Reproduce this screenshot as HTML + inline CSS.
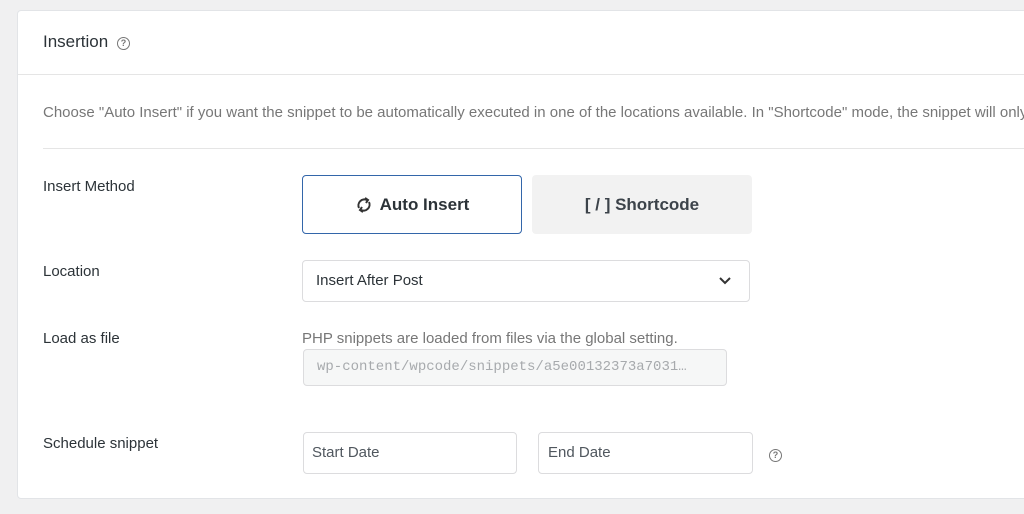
<!DOCTYPE html>
<html><head><meta charset="utf-8"><style>
*{box-sizing:border-box;margin:0;padding:0}
body{width:1024px;height:514px;background:#f0f0f1;font-family:"Liberation Sans",sans-serif;color:#3c434a;position:relative;overflow:hidden}
.card{position:absolute;left:17px;top:10px;width:1020px;height:489px;background:#fff;border:1px solid #e2e4e7;border-radius:4px}
.abs{position:absolute;white-space:nowrap}
.q{display:inline-block;width:13px;height:13px;border:1.3px solid #777;border-radius:50%;font-size:9px;line-height:11px;text-align:center;color:#777;font-weight:bold}
.lbl{font-size:15px;color:#2c3338}
.box{position:absolute;border:1px solid #dcdcde;border-radius:4px;background:#fff}
</style></head><body>
<div class="card"></div>
<div class="abs" style="left:43px;top:32px;font-size:17px;color:#2c3338">Insertion <span class="q" style="margin-left:4px;vertical-align:1px">?</span></div>
<div class="abs" style="left:18px;top:74px;width:1010px;height:1px;background:#e5e5e5"></div>
<div class="abs" style="left:43px;top:104px;font-size:15px;color:#777">Choose "Auto Insert" if you want the snippet to be automatically executed in one of the locations available. In "Shortcode" mode, the snippet will only</div>
<div class="abs" style="left:43px;top:148px;width:990px;height:1px;background:#e5e5e5"></div>
<div class="abs lbl" style="left:43px;top:178px">Insert Method</div>
<div class="abs" style="left:302px;top:175px;width:220px;height:59px;border:1.5px solid #3366aa;border-radius:4px;display:flex;align-items:center;justify-content:center;font-size:17px;font-weight:bold;color:#2c3338">
<svg width="18" height="18" viewBox="0 0 18 18" style="margin-right:7px" fill="none" stroke="#333" stroke-width="2"><path d="M4 12A6 6 0 0 1 12 4"/><path d="M14 6A6 6 0 0 1 6 14"/><path d="M10 2l3 2-2 3" /><path d="M8 16l-3-2 2-3"/></svg>Auto Insert</div>
<div class="abs" style="left:532px;top:175px;width:220px;height:59px;background:#f2f2f2;border-radius:4px;display:flex;align-items:center;justify-content:center;font-size:17px;font-weight:bold;color:#3c434a">[ / ]&nbsp;Shortcode</div>
<div class="abs lbl" style="left:43px;top:263px">Location</div>
<div class="box" style="left:302px;top:260px;width:448px;height:42px"></div>
<div class="abs" style="left:316px;top:272px;font-size:15px;color:#2c3338">Insert After Post</div>
<svg class="abs" style="left:718px;top:276px" width="14" height="10" viewBox="0 0 14 10"><path d="M2 2l5 5 5-5" fill="none" stroke="#333" stroke-width="2"/></svg>
<div class="abs lbl" style="left:43px;top:330px">Load as file</div>
<div class="abs" style="left:302px;top:330px;font-size:15px;color:#777">PHP snippets are loaded from files via the global setting.</div>
<div class="box" style="left:303px;top:349px;width:424px;height:37px;background:#f6f7f7"></div>
<div class="abs" style="left:317px;top:359px;font-family:'Liberation Mono',monospace;font-size:14px;color:#a7aaad">wp-content/wpcode/snippets/a5e00132373a7031…</div>
<div class="abs lbl" style="left:43px;top:435px">Schedule snippet</div>
<div class="box" style="left:303px;top:432px;width:214px;height:42px"></div>
<div class="abs" style="left:312px;top:444px;font-size:15px;color:#50575e">Start Date</div>
<div class="box" style="left:538px;top:432px;width:215px;height:42px"></div>
<div class="abs" style="left:548px;top:444px;font-size:15px;color:#50575e">End Date</div>
<div class="abs" style="left:769px;top:445px"><span class="q">?</span></div>
</body></html>
